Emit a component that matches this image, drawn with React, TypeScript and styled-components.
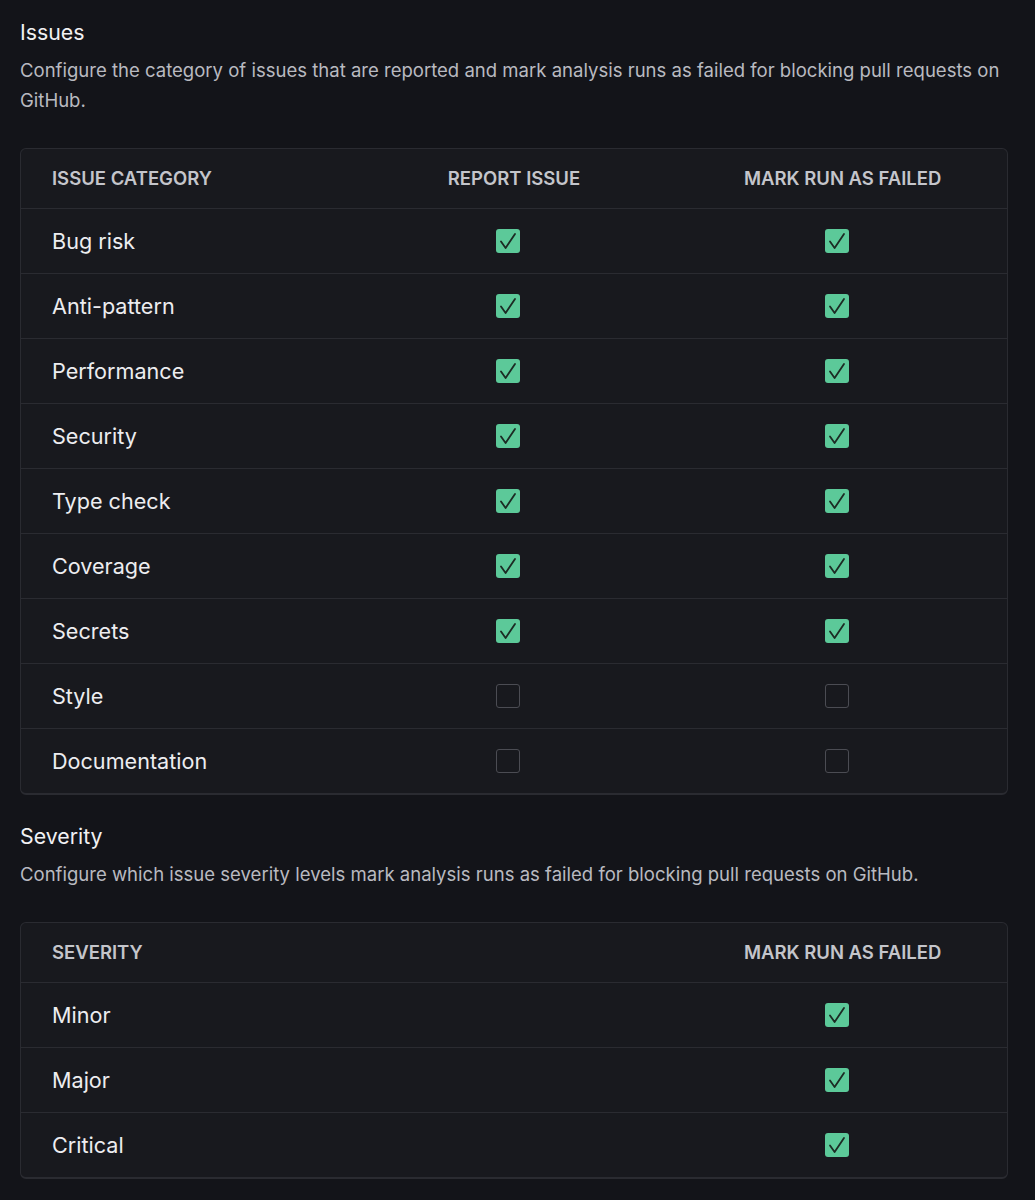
import React from 'react'
import styled, { createGlobalStyle } from 'styled-components'

const GlobalStyle = createGlobalStyle`
  html, body {
    margin: 0;
    padding: 0;
    background: #131419;
  }
  body {
    font-family: Inter, "Noto Sans", sans-serif;
    color: #e9e9ec;
  }
`

const Page = styled.div`
  padding: 17px 27px 24px 20px;
`

const Section = styled.section`
  margin-bottom: 26px;
`

const Title = styled.h2`
  margin: 0;
  font-size: 21.3px;
  font-weight: 400;
  line-height: 30px;
  color: #f1f1f3;
`

const Description = styled.p`
  margin: 8px 0 0;
  font-size: 18.55px;
  line-height: 30px;
  color: #b9bac0;
`

const Table = styled.div`
  margin-top: 33px;
  background: #18191e;
  border: 1px solid #2a2b31;
  border-bottom-width: 2px;
  border-radius: 6px;
  overflow: hidden;
`

const Row = styled.div<{ $header?: boolean }>`
  display: grid;
  grid-template-columns: repeat(3, 1fr);
  align-items: center;
  height: ${({ $header }) => ($header ? 59 : 65)}px;
  border-top: ${({ $header }) => ($header ? 'none' : '1px solid #2a2b31')};
  box-sizing: border-box;
`

const HeadCell = styled.div<{ $center?: boolean }>`
  padding-left: ${({ $center }) => ($center ? 0 : 31)}px;
  padding-bottom: 2px;
  text-align: ${({ $center }) => ($center ? 'center' : 'left')};
  font-size: 18.5px;
  font-weight: 600;
  color: #c4c5cb;
  text-transform: uppercase;
`

const LabelCell = styled.div`
  padding-left: 31px;
  font-size: 21.6px;
  color: #ededf0;
`

const BoxCell = styled.div`
  display: flex;
  justify-content: center;
  padding-right: 12px;
`

const Box = styled.span<{ $checked: boolean }>`
  width: 24px;
  height: 24px;
  box-sizing: border-box;
  border-radius: 3px;
  display: flex;
  align-items: center;
  justify-content: center;
  background: ${({ $checked }) => ($checked ? '#5cc999' : 'transparent')};
  border: ${({ $checked }) => ($checked ? 'none' : '1.5px solid #4b4c53')};
`

const Checkbox = ({ checked }: { checked: boolean }) => (
  <Box $checked={checked}>
    {checked && (
      <svg width="24" height="24" viewBox="0 0 24 24" fill="none">
        <path d="M5 12.5 L9.6 19 L19 5" stroke="#1c2b24" strokeWidth="1.8" strokeLinecap="round" strokeLinejoin="round" />
      </svg>
    )}
  </Box>
)

const issues: [string, boolean][] = [
  ['Bug risk', true],
  ['Anti-pattern', true],
  ['Performance', true],
  ['Security', true],
  ['Type check', true],
  ['Coverage', true],
  ['Secrets', true],
  ['Style', false],
  ['Documentation', false],
]

const severities = ['Minor', 'Major', 'Critical']

export default function App() {
  return (
    <Page>
      <GlobalStyle />
      <Section>
        <Title>Issues</Title>
        <Description>
          Configure the category of issues that are reported and mark analysis runs as failed for blocking pull requests on GitHub.
        </Description>
        <Table>
          <Row $header>
            <HeadCell>Issue category</HeadCell>
            <HeadCell $center>Report issue</HeadCell>
            <HeadCell $center>Mark run as failed</HeadCell>
          </Row>
          {issues.map(([name, on]) => (
            <Row key={name}>
              <LabelCell>{name}</LabelCell>
              <BoxCell>
                <Checkbox checked={on} />
              </BoxCell>
              <BoxCell>
                <Checkbox checked={on} />
              </BoxCell>
            </Row>
          ))}
        </Table>
      </Section>
      <Section>
        <Title>Severity</Title>
        <Description>
          Configure which issue severity levels mark analysis runs as failed for blocking pull requests on GitHub.
        </Description>
        <Table>
          <Row $header>
            <HeadCell>Severity</HeadCell>
            <div />
            <HeadCell $center>Mark run as failed</HeadCell>
          </Row>
          {severities.map((name) => (
            <Row key={name}>
              <LabelCell>{name}</LabelCell>
              <div />
              <BoxCell>
                <Checkbox checked />
              </BoxCell>
            </Row>
          ))}
        </Table>
      </Section>
    </Page>
  )
}
